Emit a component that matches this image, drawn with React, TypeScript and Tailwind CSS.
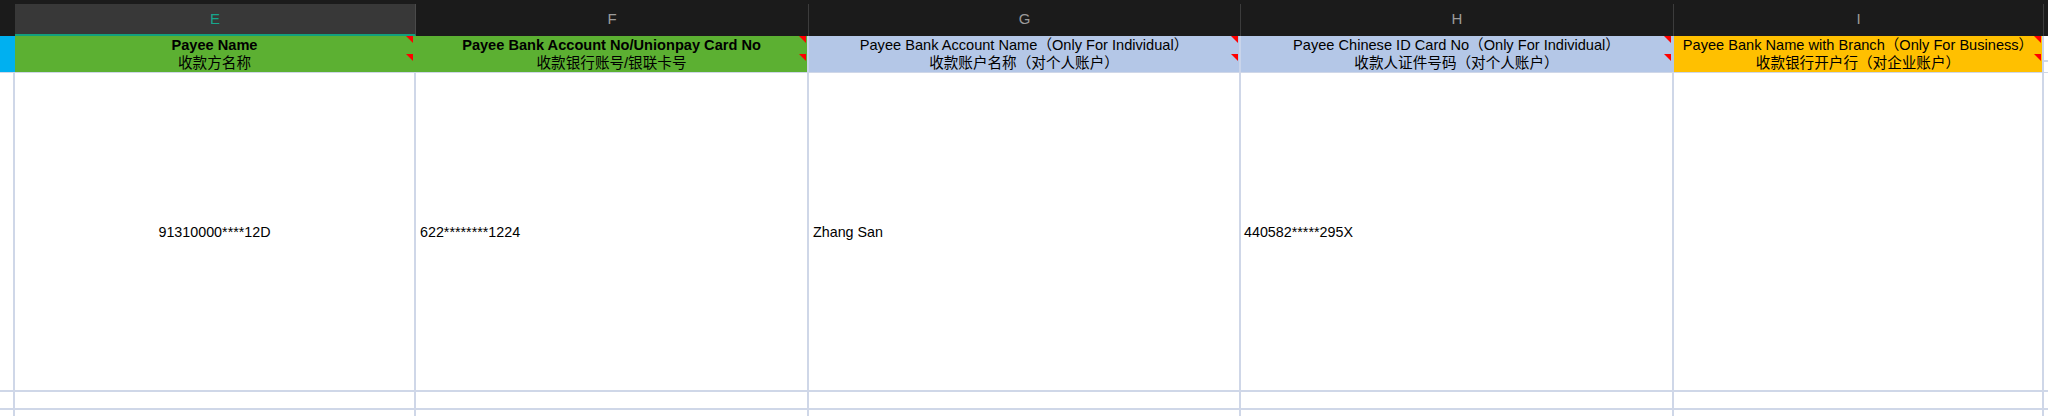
const font = { fontFamily: '"Liberation Sans", Arial, "Noto Sans CJK SC", sans-serif' };

type Col = {
  letter: string;
  width: string;
  bg: string;
  sep: string;
  bold: boolean;
  en: string;
  zh: string;
  value: string;
  align: string;
};

const cols: Col[] = [
  {
    letter: 'E',
    width: 'w-[401px]',
    bg: 'bg-[#5cb032]',
    sep: 'border-r-[#5cb032]',
    bold: true,
    en: 'Payee Name',
    zh: '收款方名称',
    value: '91310000****12D',
    align: 'justify-center',
  },
  {
    letter: 'F',
    width: 'w-[393px]',
    bg: 'bg-[#5cb032]',
    sep: 'border-r-[#c9d4ea]',
    bold: true,
    en: 'Payee Bank Account No/Unionpay Card No',
    zh: '收款银行账号/银联卡号',
    value: '622********1224',
    align: 'justify-start pl-[4px]',
  },
  {
    letter: 'G',
    width: 'w-[432px]',
    bg: 'bg-[#b4c7e7]',
    sep: 'border-r-[#c9d4ea]',
    bold: false,
    en: 'Payee Bank Account Name（Only For Individual）',
    zh: '收款账户名称（对个人账户）',
    value: 'Zhang San',
    align: 'justify-start pl-[4px]',
  },
  {
    letter: 'H',
    width: 'w-[433px]',
    bg: 'bg-[#b4c7e7]',
    sep: 'border-r-[#b4c7e7]',
    bold: false,
    en: 'Payee Chinese ID Card No（Only For Individual）',
    zh: '收款人证件号码（对个人账户）',
    value: '440582*****295X',
    align: 'justify-start pl-[3px]',
  },
  {
    letter: 'I',
    width: 'w-[370px]',
    bg: 'bg-[#ffc000]',
    sep: 'border-r-[#c9d4ea]',
    bold: false,
    en: 'Payee Bank Name with Branch（Only For Business）',
    zh: '收款银行开户行（对企业账户）',
    value: '',
    align: 'justify-start pl-[4px]',
  },
];

function Flag({ top }: { top: string }) {
  return (
    <div
      className={`absolute right-[1px] ${top} w-0 h-0 border-l-[7px] border-l-transparent border-t-[7px] border-t-[#ff0000]`}
    />
  );
}

function EmptyRow({ height }: { height: string }) {
  return (
    <div className={`flex ${height} border-b-2 border-b-[#cfd7e8]`}>
      <div className="w-[15px] shrink-0 border-r-2 border-r-[#cfd7e8]" />
      {cols.map((c) => (
        <div key={c.letter} className={`${c.width} shrink-0 border-r-2 border-r-[#cfd7e8]`} />
      ))}
      <div className="flex-1" />
    </div>
  );
}

export default function App() {
  return (
    <div className="w-[2048px] h-[416px] overflow-hidden bg-white text-black" style={font}>
      {/* Column letters */}
      <div className="flex h-[36px] bg-[#1b1b1b]">
        <div className="w-[15px] shrink-0" />
        {cols.map((c) =>
          c.letter === 'E' ? (
            <div key={c.letter} className={`${c.width} shrink-0 pt-[4px] flex flex-col`}>
              <div className="flex-1 flex items-center justify-center bg-[#383838] border-r border-r-[#4a4a4a] border-b-2 border-b-[#12a07e] text-[15px] text-[#16a58c]">
                E
              </div>
            </div>
          ) : (
            <div key={c.letter} className={`${c.width} shrink-0 pt-[4px] flex flex-col`}>
              <div className="flex-1 flex items-center justify-center border-r border-r-[#3c3c3c] text-[15px] text-[#9b9b9b] pb-[2px]">
                {c.letter}
              </div>
            </div>
          )
        )}
        <div className="flex-1" />
      </div>

      {/* Header row */}
      <div className="flex h-[36px]">
        <div className="w-[15px] shrink-0 bg-[#00b0f0] border-r border-r-[#00b0f0]" />
        {cols.map((c) => (
          <div
            key={c.letter}
            className={`relative ${c.width} shrink-0 ${c.bg} border-r-2 ${c.sep} flex flex-col items-center justify-center text-[14.6px] leading-[18px] whitespace-nowrap`}
          >
            <span className={c.bold ? 'font-bold' : ''}>{c.en}</span>
            <span>{c.zh}</span>
            <Flag top="top-0" />
            <Flag top="top-[18px]" />
          </div>
        ))}
        <div className="flex-1 flex flex-col">
          <div className="h-[26px] border-b-2 border-b-[#cfd7e8]" />
        </div>
      </div>

      {/* Data row */}
      <div className="flex h-[320px] border-t border-t-[#cfd7e8] border-b-2 border-b-[#cfd7e8]">
        <div className="w-[15px] shrink-0 border-r-2 border-r-[#cfd7e8]" />
        {cols.map((c) => (
          <div
            key={c.letter}
            className={`${c.width} shrink-0 border-r-2 border-r-[#cfd7e8] flex items-center ${c.align} text-[14.3px] whitespace-nowrap pt-[2px]`}
          >
            {c.value}
          </div>
        ))}
        <div className="flex-1" />
      </div>

      <EmptyRow height="h-[18px]" />
      <EmptyRow height="h-[18px]" />
    </div>
  );
}
